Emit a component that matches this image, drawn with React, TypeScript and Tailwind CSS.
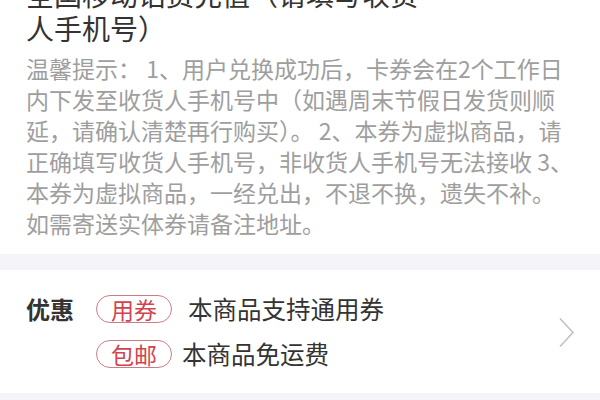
import React from 'react';

const tipLines = [
  '温馨提示： 1、用户兑换成功后，卡券会在2个工作日',
  '内下发至收货人手机号中（如遇周末节假日发货则顺',
  '延，请确认清楚再行购买）。 2、本券为虚拟商品，请',
  '正确填写收货人手机号，非收货人手机号无法接收 3、',
  '本券为虚拟商品，一经兑出，不退不换，遗失不补。',
  '如需寄送实体券请备注地址。',
];

const Badge = ({ label }: { label: string }) => (
  <span className="inline-flex items-center justify-center h-[28px] w-[76px] shrink-0 rounded-full border-[1.5px] border-[#cc7d83] text-[23px] leading-none text-[#d2434e]">
    {label}
  </span>
);

export default function App() {
  return (
    <div
      className="w-[600px] h-[400px] overflow-hidden bg-[#f5f5f9]"
      style={{ fontFamily: '"Noto Sans CJK SC", "Noto Sans", sans-serif' }}
    >
      {/* product info */}
      <div className="bg-white pl-[26px] pb-[15px]">
        <div className="-mt-[23px] text-[28px] leading-[34px] text-[#333333]">
          <div className="whitespace-nowrap">全国移动话费充值（请填写收货</div>
          <div className="whitespace-nowrap">人手机号）</div>
        </div>
        <div className="mt-[8px] text-[23px] leading-[31px] text-[#9e9e9e]">
          {tipLines.map((line, i) => (
            <div key={i} className="whitespace-nowrap">
              {line}
            </div>
          ))}
        </div>
      </div>

      {/* promotions */}
      <div className="mt-[16px] bg-white h-[123px] flex items-center pl-[26px] pr-[26px]">
        <div className="flex items-start">
          <div className="h-[28px] flex items-center text-[24px] font-bold leading-none text-[#333333]">优惠</div>
          <div className="ml-[22px] flex flex-col gap-[17px]">
            <div className="flex items-center gap-[16px]">
              <Badge label="用券" />
              <span className="text-[24.5px] leading-[28px] text-[#333333]">本商品支持通用券</span>
            </div>
            <div className="flex items-center gap-[10px]">
              <Badge label="包邮" />
              <span className="text-[24.5px] leading-[28px] text-[#333333]">本商品免运费</span>
            </div>
          </div>
        </div>
        <div className="flex-1" />
        <svg width="17" height="31" viewBox="0 0 17 31" className="mt-[2px] -mr-[1px]">
          <path d="M2 1.5 L15 15.5 L2 29.5" fill="none" stroke="#c2c2c2" strokeWidth="1.6" />
        </svg>
      </div>
    </div>
  );
}
